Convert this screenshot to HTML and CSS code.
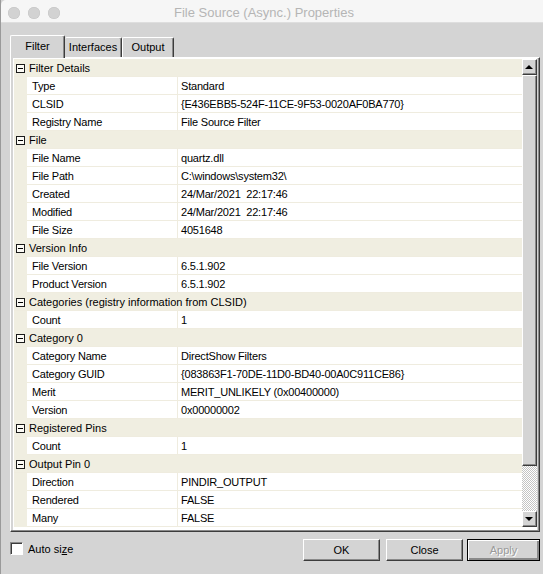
FILE: index.html
```html
<!DOCTYPE html>
<html>
<head>
<meta charset="utf-8">
<title>File Source (Async.) Properties</title>
<link rel="stylesheet" href="styles.css">
</head>
<body>
<div class="window">
  <div class="titlebar">
    <div class="lights"><span></span><span></span><span></span></div>
    <div class="title">File Source (Async.) Properties</div>
  </div>
  <div class="tabs">
    <div class="tab active">Filter</div>
    <div class="tab t-int">Interfaces</div>
    <div class="tab t-out">Output</div>
  </div>
  <div class="page">
    <div class="grid">
      <div class="rows">
        <div class="row head"><span class="box"></span><span class="htext">Filter Details</span></div>
        <div class="row"><span class="ind"></span><span class="name">Type</span><span class="val">Standard</span></div>
        <div class="row"><span class="ind"></span><span class="name">CLSID</span><span class="val">{E436EBB5-524F-11CE-9F53-0020AF0BA770}</span></div>
        <div class="row"><span class="ind"></span><span class="name">Registry Name</span><span class="val">File Source Filter</span></div>
        <div class="row head"><span class="box"></span><span class="htext">File</span></div>
        <div class="row"><span class="ind"></span><span class="name">File Name</span><span class="val">quartz.dll</span></div>
        <div class="row"><span class="ind"></span><span class="name">File Path</span><span class="val">C:\windows\system32\</span></div>
        <div class="row"><span class="ind"></span><span class="name">Created</span><span class="val">24/Mar/2021  22:17:46</span></div>
        <div class="row"><span class="ind"></span><span class="name">Modified</span><span class="val">24/Mar/2021  22:17:46</span></div>
        <div class="row"><span class="ind"></span><span class="name">File Size</span><span class="val">4051648</span></div>
        <div class="row head"><span class="box"></span><span class="htext">Version Info</span></div>
        <div class="row"><span class="ind"></span><span class="name">File Version</span><span class="val">6.5.1.902</span></div>
        <div class="row"><span class="ind"></span><span class="name">Product Version</span><span class="val">6.5.1.902</span></div>
        <div class="row head"><span class="box"></span><span class="htext">Categories (registry information from CLSID)</span></div>
        <div class="row"><span class="ind"></span><span class="name">Count</span><span class="val">1</span></div>
        <div class="row head"><span class="box"></span><span class="htext">Category 0</span></div>
        <div class="row"><span class="ind"></span><span class="name">Category Name</span><span class="val">DirectShow Filters</span></div>
        <div class="row"><span class="ind"></span><span class="name">Category GUID</span><span class="val">{083863F1-70DE-11D0-BD40-00A0C911CE86}</span></div>
        <div class="row"><span class="ind"></span><span class="name">Merit</span><span class="val">MERIT_UNLIKELY (0x00400000)</span></div>
        <div class="row"><span class="ind"></span><span class="name">Version</span><span class="val">0x00000002</span></div>
        <div class="row head"><span class="box"></span><span class="htext">Registered Pins</span></div>
        <div class="row"><span class="ind"></span><span class="name">Count</span><span class="val">1</span></div>
        <div class="row head"><span class="box"></span><span class="htext">Output Pin 0</span></div>
        <div class="row"><span class="ind"></span><span class="name">Direction</span><span class="val">PINDIR_OUTPUT</span></div>
        <div class="row"><span class="ind"></span><span class="name">Rendered</span><span class="val">FALSE</span></div>
        <div class="row"><span class="ind"></span><span class="name">Many</span><span class="val">FALSE</span></div>
      </div>
      <div class="scrollbar">
        <div class="sb-btn"><span class="arrow-up"></span></div>
        <div class="thumb"></div>
        <div class="track"></div>
        <div class="sb-btn"><span class="arrow-down"></span></div>
      </div>
    </div>
  </div>
  <div class="footer">
    <label class="check"><span class="cbox"></span><span>Auto si<u>z</u>e</span></label>
    <div class="spacer"></div>
    <div class="btn">OK</div>
    <div class="btn">Close</div>
    <div class="btn default disabled">Apply</div>
  </div>
</div>
</body>
</html>
```
FILE: styles.css
```css
html, body {
  margin: 0;
  padding: 0;
}
body {
  width: 543px;
  height: 574px;
  overflow: hidden;
  background: #d4d4d4;
  font-family: "Liberation Sans", Arial, sans-serif;
  font-size: 10.5px;
  color: #000;
}
.window {
  height: 574px;
  background: #d4d4d4;
  border-left: 1px solid #9a9a9a;
  box-sizing: border-box;
}
.titlebar {
  height: 22px;
  background: #f6f6f6;
  border-bottom: 1px solid #dedede;
  border-top-left-radius: 5px;
  display: flex;
  align-items: center;
}
.lights {
  display: flex;
  gap: 8px;
  margin-left: 7px;
  margin-top: 3px;
}
.lights span {
  width: 12px;
  height: 12px;
  border-radius: 50%;
  background: #d2d2d2;
  box-shadow: inset 0 0 0 0.5px #c3c3c3;
}
.title {
  margin-left: 114px;
  margin-top: 2px;
  font-size: 13px;
  color: #b5b5b5;
}
.tabs {
  display: flex;
  align-items: flex-end;
  height: 22px;
  margin-top: 12px;
  padding-left: 9px;
  position: relative;
  z-index: 1;
}
.tab {
  box-sizing: border-box;
  height: 20px;
  border-top: 1px solid #fff;
  border-left: 1px solid #fff;
  border-right: 1px solid #3c3c3c;
  box-shadow: inset -1px 0 #8a8a8a;
  border-top-left-radius: 2px;
  border-top-right-radius: 2px;
  text-align: center;
  padding-top: 3px;
  font-size: 11px;
  background: #d4d4d4;
}
.tab.active {
  width: 55px;
  height: 23px;
  margin-bottom: -1px;
  padding-top: 4px;
}
.t-int {
  width: 57px;
  border-left: none;
}
.t-out {
  width: 52px;
}
.page {
  box-sizing: border-box;
  width: 530px;
  height: 475px;
  margin-left: 9px;
  border-top: 1px solid #fff;
  border-left: 1px solid #fff;
  border-right: 1px solid #3c3c3c;
  border-bottom: 1px solid #3c3c3c;
  box-shadow: inset -1px -1px #8a8a8a;
  padding: 0 2px 2px 2px;
}
.grid {
  display: flex;
  height: 472px;
  box-sizing: border-box;
  background: #fff;
  padding: 1px 0 3px 1px;
}
.rows {
  flex: 1;
}
.row {
  display: flex;
  align-items: center;
  height: 18px;
  box-sizing: border-box;
  border-bottom: 1px solid #efecdf;
  white-space: pre;
}
.row.head {
  background: #f0eee1;
}
.box {
  box-sizing: border-box;
  width: 9px;
  height: 9px;
  margin-left: 2px;
  margin-top: 1px;
  border: 1px solid #1a1a1a;
  background: #fbfaf5;
  display: flex;
  align-items: center;
  justify-content: center;
}
.box::before {
  content: "";
  width: 5px;
  height: 1px;
  background: #000;
}
.htext {
  margin-left: 4px;
  padding-top: 1px;
  font-size: 11px;
}
.ind {
  width: 13px;
  height: 18px;
  background: #f0eee1;
  align-self: flex-start;
}
.name {
  box-sizing: border-box;
  width: 151px;
  height: 17px;
  line-height: 17px;
  padding-left: 5px;
  padding-top: 1px;
  border-right: 1px solid #efecdf;
  align-self: flex-start;
  font-size: 11px;
  letter-spacing: -0.2px;
}
.val {
  padding-left: 3px;
  padding-top: 1px;
  font-size: 11px;
  letter-spacing: -0.2px;
}
.scrollbar {
  width: 15px;
  display: flex;
  flex-direction: column;
}
.sb-btn, .thumb {
  box-sizing: border-box;
  background: #d4d4d4;
  border-top: 1px solid #fff;
  border-left: 1px solid #fff;
  border-right: 1px solid #3c3c3c;
  border-bottom: 1px solid #3c3c3c;
  box-shadow: inset -1px -1px #8a8a8a;
}
.sb-btn {
  height: 16px;
  display: flex;
  align-items: center;
  justify-content: center;
}
.thumb {
  height: 391px;
}
.track {
  flex: 1;
  background: repeating-conic-gradient(#ffffff 0 25%, #c4c4c4 0 50%) 0 0 / 2px 2px;
}
.arrow-up {
  width: 0;
  height: 0;
  border-left: 4px solid transparent;
  border-right: 4px solid transparent;
  border-bottom: 4px solid #000;
  margin-right: 1px;
  margin-bottom: 1px;
}
.arrow-down {
  width: 0;
  height: 0;
  border-left: 4px solid transparent;
  border-right: 4px solid transparent;
  border-top: 4px solid #000;
  margin-right: 1px;
}
.footer {
  display: flex;
  align-items: flex-start;
  margin-top: 7px;
  padding-left: 9px;
  padding-right: 3px;
}
.check {
  display: flex;
  align-items: center;
  gap: 5px;
  margin-top: 3px;
  font-size: 11px;
}
.cbox {
  box-sizing: border-box;
  width: 13px;
  height: 13px;
  background: #fff;
  border-top: 1px solid #8a8a8a;
  border-left: 1px solid #8a8a8a;
  border-right: 1px solid #fff;
  border-bottom: 1px solid #fff;
  box-shadow: inset 1px 1px #3c3c3c;
}
.spacer {
  flex: 1;
}
.btn {
  box-sizing: border-box;
  width: 77px;
  height: 22px;
  margin-left: 6px;
  background: #d4d4d4;
  border-top: 1px solid #fff;
  border-left: 1px solid #fff;
  border-right: 1px solid #3c3c3c;
  border-bottom: 1px solid #3c3c3c;
  box-shadow: inset -1px -1px #8a8a8a;
  display: flex;
  align-items: center;
  justify-content: center;
  font-size: 11px;
}
.btn.default {
  width: 73px;
  margin-left: 4px;
  border: 1px solid #000;
  box-shadow: inset 1px 1px #fff, inset -2px -2px #8a8a8a;
}
.btn.disabled {
  color: #9a9a9a;
  text-shadow: 1px 1px #fff;
}
```
